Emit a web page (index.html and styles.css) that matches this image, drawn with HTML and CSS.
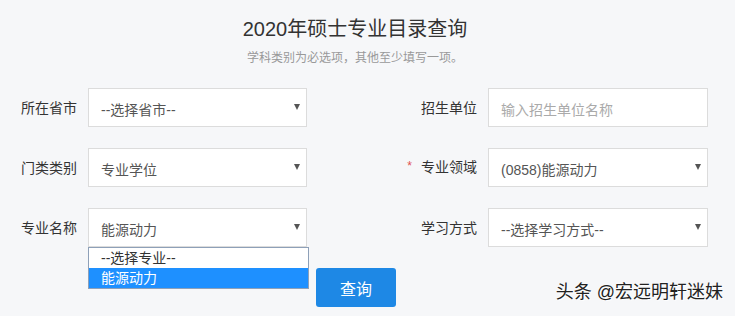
FILE: index.html
```html
<!DOCTYPE html>
<html lang="zh-CN">
<head>
<meta charset="utf-8">
<link rel="stylesheet" href="styles.css">
</head>
<body>
<div class="page">
  <h1 class="title">2020年硕士专业目录查询</h1>
  <p class="subtitle">学科类别为必选项，其他至少填写一项。</p>
  <div class="form">
    <label class="label">所在省市</label>
    <div class="select"><span>--选择省市--</span><i class="arrow"></i></div>
    <label class="label">招生单位</label>
    <div class="input"><span class="ph">输入招生单位名称</span></div>

    <label class="label">门类类别</label>
    <div class="select"><span>专业学位</span><i class="arrow"></i></div>
    <label class="label"><span class="star">*</span>专业领域</label>
    <div class="select"><span>(0858)能源动力</span><i class="arrow"></i></div>

    <label class="label">专业名称</label>
    <div class="select open"><span>能源动力</span><i class="arrow"></i>
      <ul class="dropdown">
        <li>--选择专业--</li>
        <li class="active">能源动力</li>
      </ul>
    </div>
    <label class="label">学习方式</label>
    <div class="select"><span>--选择学习方式--</span><i class="arrow"></i></div>
  </div>
  <div class="actions"><button class="btn">查询</button></div>
</div>
<div class="watermark">头条 @宏远明轩迷妹</div>
</body>
</html>
```
FILE: styles.css
```css
* { box-sizing: border-box; }
html, body { margin: 0; padding: 0; }
body {
  width: 735px;
  height: 316px;
  overflow: hidden;
  background: #f6f7f9;
  font-family: "Liberation Sans", "Noto Sans CJK SC", sans-serif;
  color: #333;
  position: relative;
}
.page {
  width: 710px;
  padding-top: 14px;
}
.title {
  margin: 0;
  text-align: center;
  font-size: 20px;
  font-weight: normal;
  line-height: 30px;
  color: #333;
}
.subtitle {
  margin: 6px 0 0;
  text-align: center;
  font-size: 12px;
  line-height: 16px;
  color: #999;
}
.form {
  margin-top: 22px;
  display: grid;
  grid-template-columns: 77px 219px 159px 220px;
  column-gap: 11px;
  row-gap: 21px;
}
.label {
  font-size: 14px;
  color: #333;
  text-align: right;
  align-self: center;
  line-height: 20px;
}
.star {
  color: #e05050;
  font-size: 12px;
  margin-right: 9px;
  position: relative;
  top: -2px;
}
.select, .input {
  position: relative;
  height: 39px;
  background: #fff;
  border: 1px solid #dcdcdc;
  display: flex;
  align-items: center;
  padding: 2px 12px 0;
  font-size: 14px;
  color: #555;
}
.ph { color: #aaa; }
.arrow {
  width: 0;
  height: 0;
  border-left: 3px solid transparent;
  border-right: 3px solid transparent;
  border-top: 6px solid #555;
  margin-left: auto;
  margin-right: -6px;
  margin-top: -4px;
}
.dropdown {
  position: absolute;
  left: -1px;
  top: 38px;
  width: 221px;
  margin: 0;
  padding: 0;
  list-style: none;
  background: #fff;
  border: 1px solid #8ea0b8;
  z-index: 2;
}
.dropdown li {
  height: 20px;
  line-height: 20px;
  padding-left: 12px;
  font-size: 14px;
  color: #333;
}
.dropdown li.active {
  background: #1e90ff;
  color: #fff;
}
.actions {
  margin-top: 21px;
  display: flex;
  justify-content: center;
}
.btn {
  width: 80px;
  height: 39px;
  margin-left: 2px;
  border: 0;
  border-radius: 3px;
  background: #1e88e5;
  color: #fff;
  font-size: 16px;
  font-family: inherit;
}
.watermark {
  position: absolute;
  right: 12px;
  bottom: 13px;
  font-size: 18px;
  color: #222;
  text-shadow: 0 0 2px #fff, 1px 1px 1px #fff;
}
```
